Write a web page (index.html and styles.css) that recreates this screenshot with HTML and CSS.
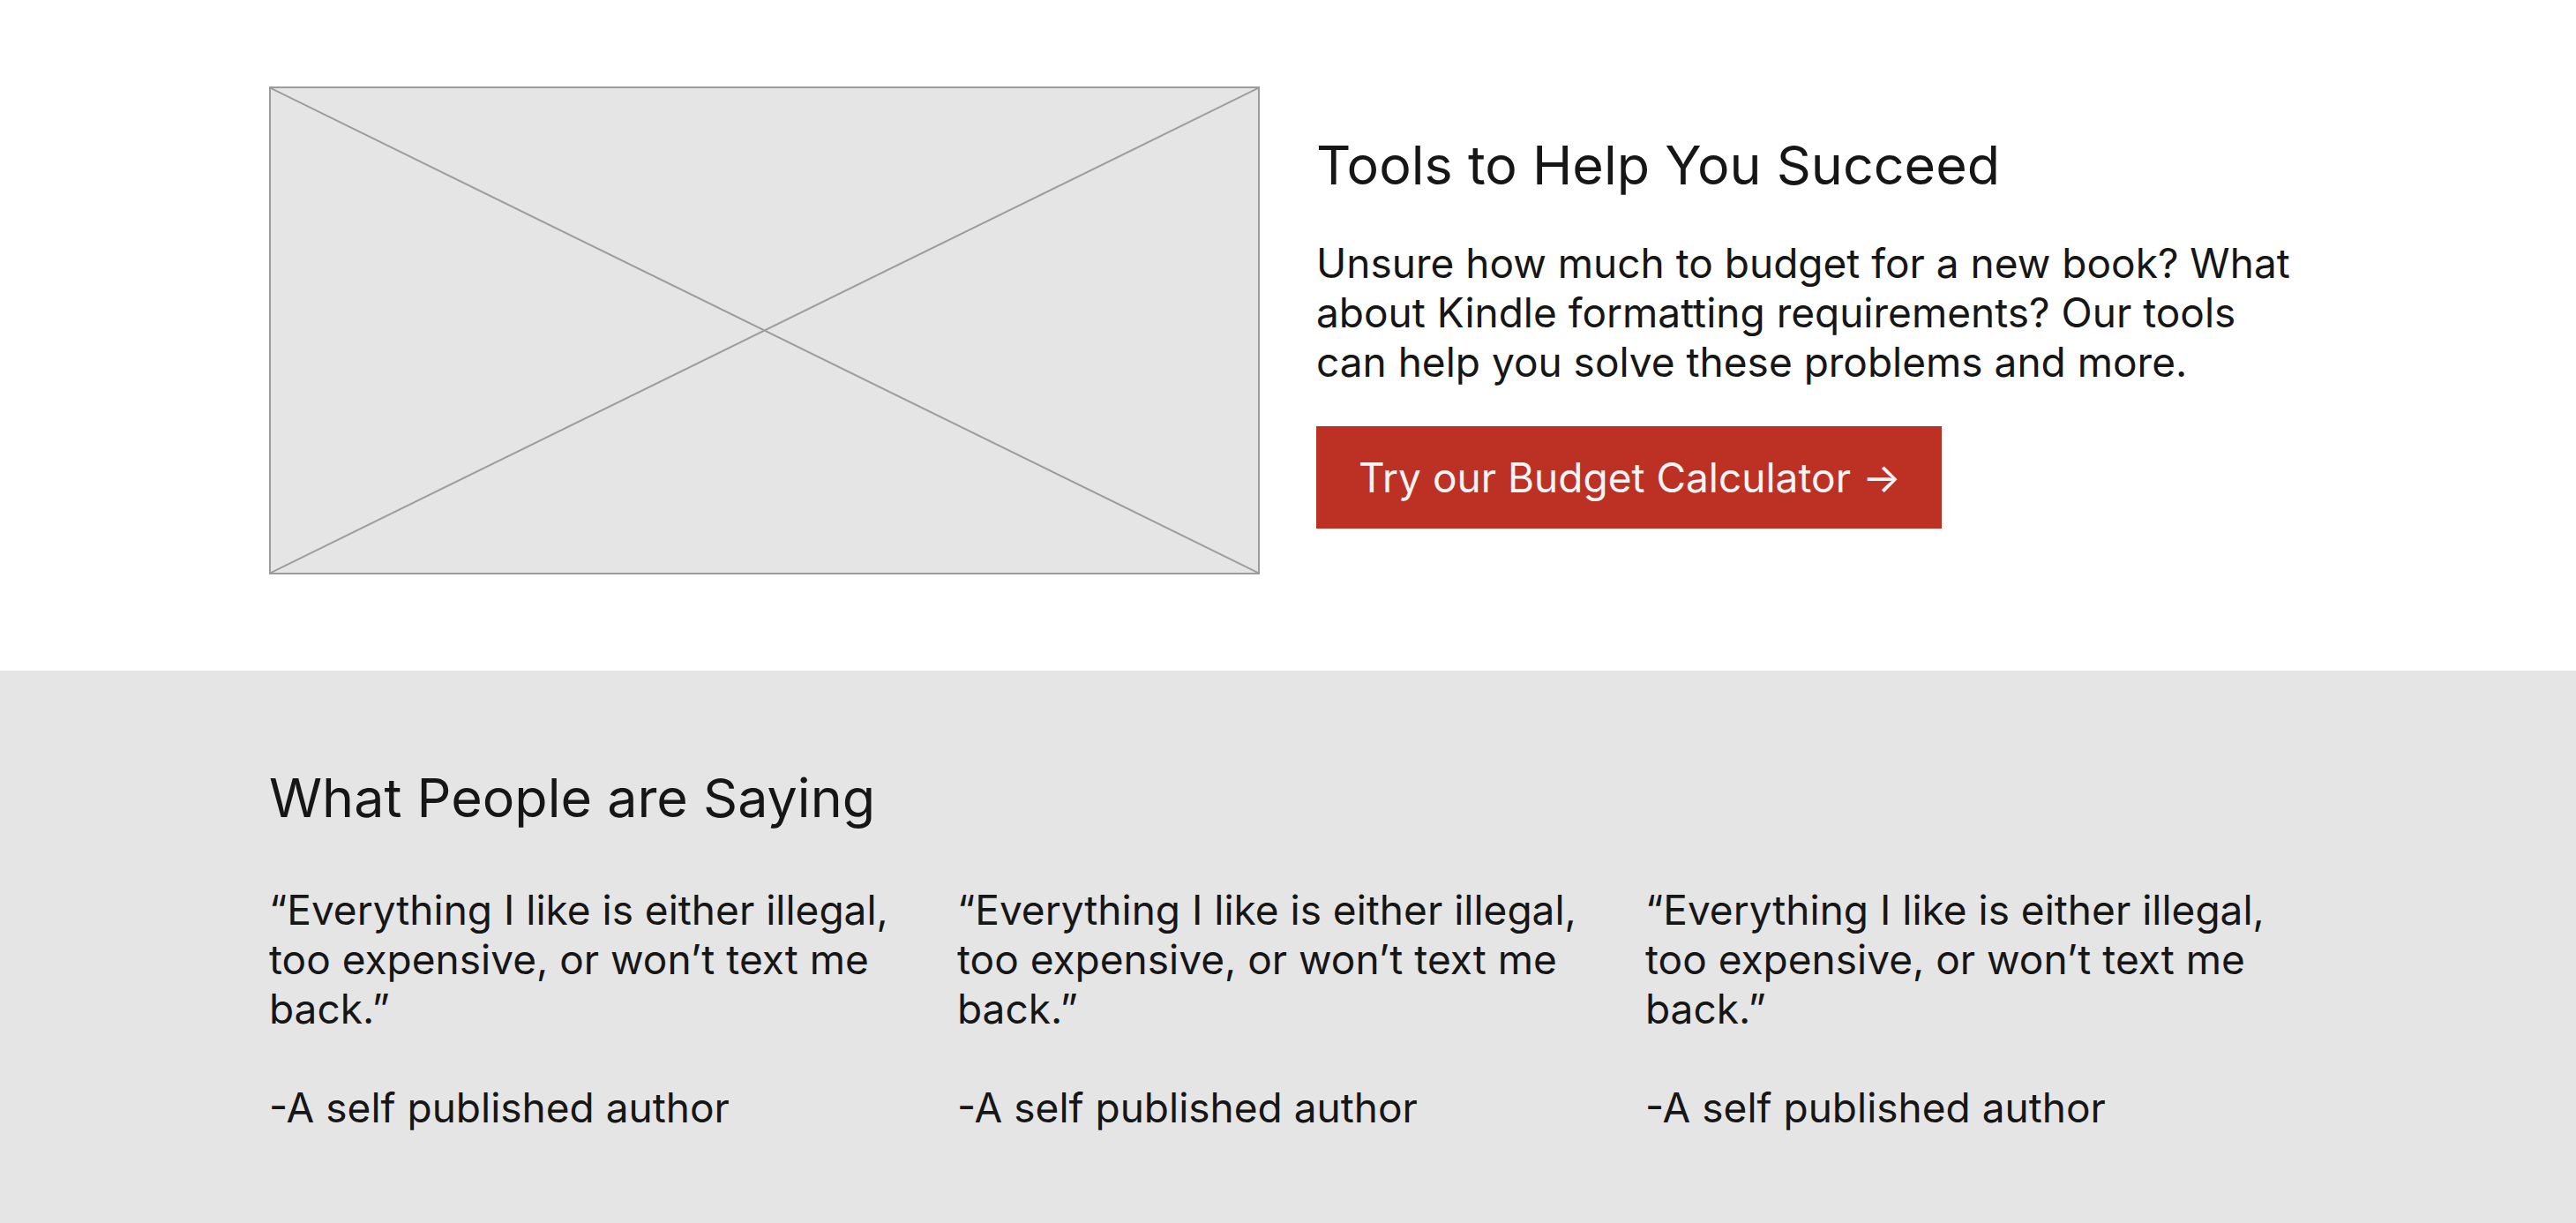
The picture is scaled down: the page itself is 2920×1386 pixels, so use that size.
FILE: index.html
```html
<!DOCTYPE html>
<html lang="en">
<head>
<meta charset="utf-8">
<title>Tools to Help You Succeed</title>
<link rel="stylesheet" href="styles.css">
</head>
<body>
<section class="tools">
  <div class="container tools-inner">
    <div class="placeholder">
      <svg class="placeholder-x" viewBox="0 0 100 100" preserveAspectRatio="none" aria-hidden="true">
        <line x1="0" y1="0" x2="100" y2="100" vector-effect="non-scaling-stroke"/>
        <line x1="100" y1="0" x2="0" y2="100" vector-effect="non-scaling-stroke"/>
      </svg>
    </div>
    <div class="tools-text">
      <h2 class="heading">Tools to Help You Succeed</h2>
      <p class="body-text">Unsure how much to budget for a new book? What about Kindle formatting requirements? Our tools can help you solve these problems and more.</p>
      <a class="btn" href="#">Try our Budget Calculator →</a>
    </div>
  </div>
</section>
<section class="testimonials">
  <div class="container">
    <h2 class="heading">What People are Saying</h2>
    <div class="quotes">
      <div class="quote">
        <p class="body-text">“Everything I like is either illegal, too expensive, or won’t text me back.”</p>
        <p class="body-text author">-A self published author</p>
      </div>
      <div class="quote">
        <p class="body-text">“Everything I like is either illegal, too expensive, or won’t text me back.”</p>
        <p class="body-text author">-A self published author</p>
      </div>
      <div class="quote">
        <p class="body-text">“Everything I like is either illegal, too expensive, or won’t text me back.”</p>
        <p class="body-text author">-A self published author</p>
      </div>
    </div>
  </div>
</section>
</body>
</html>
```
FILE: styles.css
```css
* { box-sizing: border-box; }
html, body { margin: 0; padding: 0; }
body {
  font-family: Inter, "Noto Sans", sans-serif;
  color: #161616;
  background: #ffffff;
}
.container {
  width: 2310px;
  margin: 0 auto;
}
.tools {
  padding: 98px 0 109px;
}
.tools-inner {
  display: grid;
  grid-template-columns: 1fr 1fr;
  column-gap: 64px;
  align-items: center;
}
.placeholder {
  height: 553px;
  background: #e5e5e5;
  border: 2px solid #9c9c9c;
}
.placeholder-x {
  display: block;
  width: 100%;
  height: 100%;
}
.placeholder-x line {
  stroke: #9c9c9c;
  stroke-width: 2;
}
.heading {
  margin: 0;
  font-size: 61px;
  line-height: 72px;
  font-weight: 400;
}
.body-text {
  margin: 0;
  font-size: 46px;
  line-height: 56px;
  font-weight: 400;
}
.tools-text .body-text {
  margin-top: 47px;
}
.btn {
  display: inline-block;
  margin-top: 45px;
  background: #bd3124;
  color: #f4f4f4;
  text-decoration: none;
  font-size: 46px;
  line-height: 54px;
  padding: 31px 46px 31px 48px;
}
.testimonials {
  background: #e5e5e5;
  padding: 108px 0 112px;
}
.quotes {
  margin-top: 63px;
  display: grid;
  grid-template-columns: repeat(3, 750px);
  column-gap: 30px;
}
.author {
  margin-top: 56px;
}
```
